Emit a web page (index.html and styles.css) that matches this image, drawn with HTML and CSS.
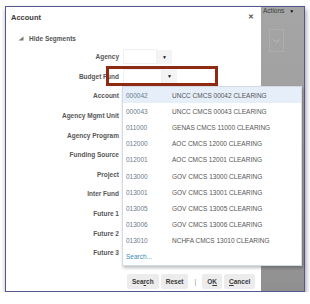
FILE: index.html
```html
<!DOCTYPE html>
<html lang="en">
<head>
    <meta charset="UTF-8">
    <title>Account</title>
    <link rel="stylesheet" href="styles.css">
</head>
<body>
<div class="shot">
    <div class="dialog">
        <div class="dlg-head">
            <span class="title">Account</span>
            <span class="close">&#x2715;</span>
        </div>
        <div class="toggle">
            <svg width="6" height="5" viewBox="0 0 6 5"><path d="M5.5 0.5 L5.5 4.5 L0.5 4.5 Z" fill="#777"/></svg>
            <span>Hide Segments</span>
        </div>
        <div class="form">
            <div class="label">Agency</div>
            <div class="field"><span class="input w-agency"></span><span class="drop">&#9660;</span></div>
            <div class="label">Budget Fund</div>
            <div class="field"><span class="input w-fund"></span><span class="drop">&#9660;</span></div>
            <div class="label">Account</div>
            <div class="field"></div>
            <div class="label">Agency Mgmt Unit</div>
            <div class="field"></div>
            <div class="label">Agency Program</div>
            <div class="field"></div>
            <div class="label">Funding Source</div>
            <div class="field"></div>
            <div class="label">Project</div>
            <div class="field"></div>
            <div class="label">Inter Fund</div>
            <div class="field"></div>
            <div class="label">Future 1</div>
            <div class="field"></div>
            <div class="label">Future 2</div>
            <div class="field"></div>
            <div class="label">Future 3</div>
            <div class="field"></div>
        </div>
        <div class="buttons">
            <span class="button">Sea<u>r</u>ch</span>
            <span class="button">Reset</span>
            <span class="sep">|</span>
            <span class="button">O<u>K</u></span>
            <span class="button"><u>C</u>ancel</span>
            <svg class="grip" width="5" height="5" viewBox="0 0 5 5"><path d="M4.5 0.5 L0.5 4.5 M4.5 2.5 L2.5 4.5" stroke="#aaa" stroke-width="0.7"/></svg>
        </div>
    </div>
    <div class="page">
        <div class="actions">Actions <span class="caret">&#9660;</span></div>
        <div class="chev">
            <svg width="7" height="4" viewBox="0 0 7 4"><path d="M0.5 0.5 L3.5 3.3 L6.5 0.5" stroke="#c4c4c4" stroke-width="0.8" fill="none"/></svg>
        </div>
    </div>

    <div class="mark"></div>

    <div class="lov">
        <div class="lov-row active"><span class="code">000042</span><span class="desc">UNCC CMCS 00042 CLEARING</span></div>
        <div class="lov-row"><span class="code">000043</span><span class="desc">UNCC CMCS 00043 CLEARING</span></div>
        <div class="lov-row"><span class="code">011000</span><span class="desc">GENAS CMCS 11000 CLEARING</span></div>
        <div class="lov-row"><span class="code">012000</span><span class="desc">AOC CMCS 12000 CLEARING</span></div>
        <div class="lov-row"><span class="code">012001</span><span class="desc">AOC CMCS 12001 CLEARING</span></div>
        <div class="lov-row"><span class="code">013000</span><span class="desc">GOV CMCS 13000 CLEARING</span></div>
        <div class="lov-row"><span class="code">013001</span><span class="desc">GOV CMCS 13001 CLEARING</span></div>
        <div class="lov-row"><span class="code">013005</span><span class="desc">GOV CMCS 13005 CLEARING</span></div>
        <div class="lov-row"><span class="code">013006</span><span class="desc">GOV CMCS 13006 CLEARING</span></div>
        <div class="lov-row"><span class="code">013010</span><span class="desc">NCHFA CMCS 13010 CLEARING</span></div>
        <div class="lov-row search">Search...</div>
    </div>
</div>
</body>
</html>
```

FILE: styles.css
```css
body {
    margin: 0;
    background: #fff;
    font-family: "Liberation Sans", Arial, sans-serif;
    color: #333;
}

.shot {
    position: relative;
    display: flex;
    width: 298px;
    height: 284px;
    margin: 6px 0 0 5px;
    border: 1px solid #55558f;
    box-shadow: 1px 3px 5px rgb(0 0 0 / 40%);
}

.dialog {
    width: 255px;
    background: #fff;
    display: flex;
    flex-direction: column;
}

.dlg-head {
    display: flex;
    justify-content: space-between;
    align-items: center;
    padding: 5px 7px 0 5px;
    height: 10px;
}

.title {
    font-size: 7.5px;
    font-weight: 700;
    color: #3a3a3a;
}

.close {
    font-size: 7px;
    font-weight: 700;
    color: #555;
}

.toggle {
    display: flex;
    align-items: center;
    gap: 5px;
    margin-top: 11px;
    padding-left: 12px;
    height: 10px;
    font-size: 6.5px;
    font-weight: 700;
    color: #555;
}

.form {
    display: grid;
    grid-template-columns: 113px 1fr;
    grid-auto-rows: 19.6px;
    column-gap: 4px;
    margin-top: 4px;
}

.label {
    text-align: right;
    align-self: center;
    font-size: 6.5px;
    font-weight: 700;
    color: #575757;
}

.field {
    display: flex;
    align-items: center;
}

.input {
    height: 13px;
    border: 1px solid #f0f0f0;
    background: #fff;
}

.w-agency {
    width: 32px;
}

.w-fund {
    width: 37px;
}

.drop {
    display: flex;
    align-items: center;
    justify-content: center;
    width: 15px;
    height: 14px;
    background: #f4f4f4;
    font-size: 5px;
    color: #111;
}

.buttons {
    margin-top: auto;
    display: flex;
    align-items: center;
    gap: 2px;
    padding: 0 0 2px 121px;
    height: 15px;
}

.button {
    display: inline-block;
    height: 15px;
    line-height: 15px;
    padding: 0 5px;
    background: #ececec;
    border-radius: 2px;
    font-size: 6.5px;
    font-weight: 700;
    color: #3a3a3a;
}

.sep {
    margin: 0 4px;
    font-size: 7px;
    color: #999;
}

.grip {
    align-self: flex-end;
    margin-left: 4px;
}

.page {
    flex: 1;
    background: linear-gradient(#a5a5a5, #9c9c9c 70%, #909090);
    padding-left: 2px;
}

.actions {
    font-size: 6.5px;
    line-height: 7px;
    color: #3a3a3a;
}

.caret {
    font-size: 5px;
    margin-left: 3px;
    color: #111;
}

.chev {
    display: flex;
    justify-content: center;
    align-items: center;
    width: 13px;
    height: 21px;
    margin: 14px 0 0 6px;
    border: 1px solid #aeaeae;
}

.mark {
    position: absolute;
    left: 100px;
    top: 59px;
    width: 106px;
    height: 14px;
    border: 3px solid #8f2b13;
}

.lov {
    position: absolute;
    left: 116px;
    top: 79px;
    width: 178px;
    background: #fff;
    border: 1px solid #d3dae3;
    box-shadow: 1px 2px 3px rgb(0 0 0 / 25%);
}

.lov-row {
    display: flex;
    align-items: center;
    height: 16.2px;
    padding-left: 3px;
    font-size: 6.5px;
}

.lov-row.active {
    background: #e5eef9;
}

.code {
    width: 46px;
    color: #687a8c;
}

.desc {
    color: #555;
}

.lov-row.search {
    color: #3a8bb5;
}
```
